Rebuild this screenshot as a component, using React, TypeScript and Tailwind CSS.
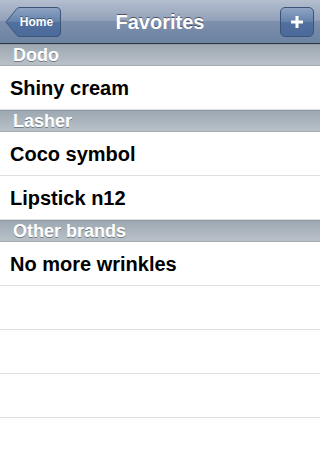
import React from "react";

const sections = [
  { title: "Dodo", items: ["Shiny cream"] },
  { title: "Lasher", items: ["Coco symbol", "Lipstick n12"] },
  { title: "Other brands", items: ["No more wrinkles"] },
];

const BackButton = () => (
  <div className="relative w-[56px] h-[30px]">
    <svg width="56" height="30" viewBox="0 0 56 30" className="absolute inset-0">
      <defs>
        <linearGradient id="bb" x1="0" y1="0" x2="0" y2="1">
          <stop offset="0" stopColor="#8fa5c3" />
          <stop offset="0.5" stopColor="#6381ab" />
          <stop offset="0.5" stopColor="#52719f" />
          <stop offset="1" stopColor="#4a6a9a" />
        </linearGradient>
      </defs>
      <path
        d="M1 15 L12 1.5 Q13 0.5 15 0.5 L51 0.5 Q55.5 0.5 55.5 5 L55.5 25 Q55.5 29.5 51 29.5 L15 29.5 Q13 29.5 12 28.5 Z"
        fill="url(#bb)"
        stroke="#3d5479"
        strokeWidth="1"
      />
    </svg>
    <span className="absolute inset-0 flex items-center justify-center pl-[7px] text-[12px] font-bold text-white [text-shadow:0_-1px_0_rgba(0,0,0,0.45)]">
      Home
    </span>
  </div>
);

const AddButton = () => (
  <div className="w-[34px] h-[30px] rounded-[5px] border border-[#3d5479] bg-[linear-gradient(#8fa5c3,#6381ab_50%,#52719f_50%,#4a6a9a)] flex items-center justify-center">
    <svg width="14" height="14" viewBox="0 0 14 14">
      <path d="M7 1 V13 M1 7 H13" stroke="#fff" strokeWidth="3" />
    </svg>
  </div>
);

export default function App() {
  return (
    <div className="w-[320px] h-[460px] overflow-hidden bg-white font-['Liberation_Sans',Arial,sans-serif]">
      {/* nav bar */}
      <div className="h-[44px] grid grid-cols-[1fr_auto_1fr] items-center px-[5px] bg-[linear-gradient(#b4bfcf,#909fb8_50%,#7d8fac_50%,#6c83a2)] border-b border-[#2d3642]">
        <div className="flex">
          <BackButton />
        </div>
        <div className="text-[20px] font-bold text-white [text-shadow:0_-1px_0_rgba(0,0,0,0.5)]">
          Favorites
        </div>
        <div className="flex justify-end pr-[1px]">
          <AddButton />
        </div>
      </div>

      {sections.map((s) => (
        <div key={s.title}>
          <div className="h-[22px] flex items-center px-[13px] bg-[linear-gradient(#9da8b2,#b9c1c8)] border-t border-[#8e9aa5] border-b border-b-[#a3abb3] text-[18px] font-bold text-white [text-shadow:0_1px_0_rgba(70,80,90,0.6)]">
            {s.title}
          </div>
          {s.items.map((it) => (
            <div key={it} className="h-[44px] flex items-center pt-[1px] px-[10px] border-b border-[#e0e0e0] text-[20px] font-bold text-black">
              {it}
            </div>
          ))}
        </div>
      ))}

      {[0, 1, 2, 3].map((i) => (
        <div key={i} className="h-[44px] border-b border-[#e0e0e0]" />
      ))}
    </div>
  );
}
